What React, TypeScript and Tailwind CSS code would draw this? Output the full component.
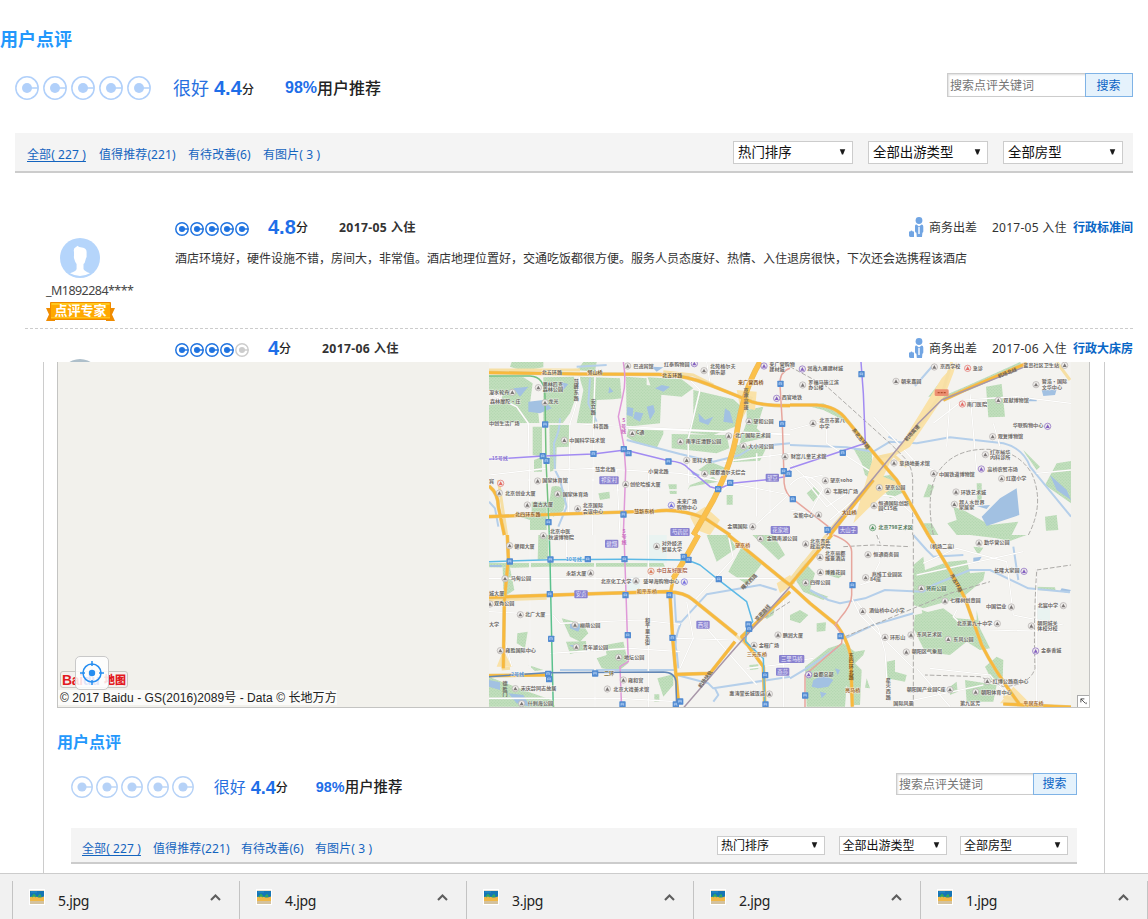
import React from "react";

const CJK = "font-['Noto_Sans','Noto_Sans_CJK_SC',sans-serif]";
const ARIAL = "font-['Liberation_Sans','Noto_Sans_CJK_SC',sans-serif]";

/* ---------- rating rings ---------- */
function Ring({ className, weight = 1.5, dot = 5 }: { className: string; weight?: number; dot?: number }) {
  return (
    <svg viewBox="0 0 24 24" preserveAspectRatio="none" className={"block shrink-0 " + className} fill="none" stroke="currentColor" strokeWidth={weight}>
      <circle cx="12" cy="12" r={12 - weight / 2 - 0.1} />
      <circle cx="12" cy="12" r={dot} fill="currentColor" stroke="none" />
      <path d="M12 12H23" />
    </svg>
  );
}

/* ---------- summary header, search and filter bar ---------- */
function Search({ compact }: { compact?: boolean }) {
  return (
    <div className={"flex text-[12px] leading-none " + (compact ? "h-[22px]" : "h-6")}>
      <div className={"flex items-center border border-r-0 border-[#ccc] bg-white pt-px pl-[2px] text-[#757575] shadow-[inset_1px_1px_2px_#ddd] " + (compact ? "w-[137px]" : "w-[138px]")}>
        搜索点评关键词
      </div>
      <div className={"flex items-center justify-center border border-[#7fb3e6] bg-[#e5f2fc] pr-px text-[#0a62c4] " + (compact ? "w-11" : "w-12 pt-px")}>搜索</div>
    </div>
  );
}

function Select({ label, compact }: { label: string; compact?: boolean }) {
  return (
    <div className={"flex items-center justify-between border border-[#ccc] bg-white leading-none text-[#111] " + (compact ? "h-[19px] w-[108px] pr-[6px] pl-[3px] text-[12px]" : "h-[23px] w-[120px] pr-[6px] pl-1 text-[13.4px]")}>
      <span className={compact ? "" : "pt-px"}>{label}</span>
      <svg viewBox="0 0 7 7" className="mb-px h-[6px] w-[7px]"><path d="M.3 .3H6.7L4.2 6.5H2.8Z" fill="#1a1a1a" /></svg>
    </div>
  );
}

function Filters({ compact }: { compact?: boolean }) {
  return (
    <div className={"flex justify-between border-b-2 border-[#ccc] bg-[#f4f4f4] " + (compact ? "h-9 pr-[9px] pl-[11px]" : "h-10 pr-[10px] pl-3")}>
      <div className={"flex text-[12px] leading-[14px] tracking-[.1px] whitespace-pre text-[#1464bf] " + (compact ? "gap-[11px] pt-[14px]" : "gap-[12px] pt-[15px]")}>
        <span className="w-[60px] underline underline-offset-2">全部( 227 )</span>
        <span className="w-[77px]">值得推荐(221)</span>
        <span className="w-[63px]">有待改善(6)</span>
        <span>有图片( 3 )</span>
      </div>
      <div className={"flex pt-2 " + (compact ? "gap-[13.5px]" : "gap-[15px]")}>
        <Select compact={compact} label="热门排序" />
        <Select compact={compact} label="全部出游类型" />
        <Select compact={compact} label="全部房型" />
      </div>
    </div>
  );
}

function Summary() {
  return (
    <div className="flex h-[31px] items-center pl-[15px] leading-none whitespace-nowrap">
      <div className="flex gap-1 text-[#b1d0fa]">
        {[0, 1, 2, 3, 4].map((i) => <Ring key={i} className="size-6" />)}
      </div>
      <span className="ml-[22px] w-[41px] text-[18px] text-[#2770df]">很好</span>
      <span className={"w-7 pt-px text-[20px] font-bold text-[#1e6ee8] " + ARIAL}>4.4</span>
      <span className="w-[42px] pt-[4px] text-[12px] font-medium text-[#222]">分</span>
      <span className={"ml-px w-8 pt-px text-[16px] font-bold text-[#1e6ee8] " + ARIAL}>98%</span>
      <span className="text-[16px] font-medium text-[#222]">用户推荐</span>
    </div>
  );
}

function CompactSummary() {
  return (
    <div className="flex h-[28px] items-center pl-[27px] leading-none whitespace-nowrap">
      <div className="flex gap-[3.2px] text-[#b6d2f7]">
        {[0, 1, 2, 3, 4].map((i) => <Ring key={i} className="size-[22px]" />)}
      </div>
      <span className="ml-[20px] w-[37px] text-[16px] text-[#2770df]">很好</span>
      <span className={"w-[25px] pt-px text-[18px] font-bold text-[#1e6ee8] " + ARIAL}>4.4</span>
      <span className="w-[40px] pt-[2px] text-[12px] font-medium text-[#222]">分</span>
      <span className={"w-[29px] text-[14.4px] font-bold text-[#1e6ee8] " + ARIAL}>98%</span>
      <span className="text-[14.4px] font-medium text-[#222]">用户推荐</span>
    </div>
  );
}

/* ---------- reviews ---------- */
function Traveller() {
  return (
    <svg viewBox="0 0 15 20" className="mr-[5px] h-5 w-[15px]" fill="#71a5e3">
      <circle cx="10" cy="3.5" r="3.4" />
      <path d="M6 9Q6 7.6 7.5 7.6L10 9.5 12.5 7.6Q14.3 7.8 14.3 9.5V14.5Q14.3 15.5 13.4 15.8L13 20H7.8L7.4 15.8Q6 15.5 6 14Z" />
      <path d="M10 10V17" stroke="#fff" strokeWidth="1.4" />
      <path d="M0 14.5H5V20H1.3Q0 20 0 18.6ZM1.2 14.5Q2.4 12.6 3.8 14.5" />
    </svg>
  );
}

function ReviewHead({ score, full, date, room, narrow }: { score: string; full: number; date: string; room: string; narrow?: boolean }) {
  return (
    <div className="flex h-7 items-center leading-none whitespace-nowrap">
      <div className="flex w-[93px] gap-px pt-[3px] text-[#1f73e0]">
        {[0, 1, 2, 3, 4].map((i) => (
          <Ring key={i} weight={2.5} dot={5.2} className={i < full ? "size-[14px]" : "size-[14px] text-[#ccc]"} />
        ))}
      </div>
      <span className={"text-[20px] font-bold text-[#1e6ee8] " + ARIAL + (narrow ? " w-[11px]" : " w-[28px]")}>{score}</span>
      <span className="w-[43px] pt-[2px] text-[12px] font-medium text-[#222]">分</span>
      <span className="pt-[2px] text-[12.2px] font-bold tracking-[.35px] text-[#333]">{date} 入住</span>
      <div className="ml-auto flex items-center text-[12px] text-[#333]">
        <Traveller />
        <span className="w-[63px] pt-[2px]">商务出差</span>
        <span className="w-[81px] pt-[2px] tracking-[.25px]">{date} 入住</span>
        <span className="pt-[2px] font-bold text-[#0866c6]">{room}</span>
      </div>
    </div>
  );
}

function Avatar({ className }: { className: string }) {
  return (
    <svg viewBox="0 0 40 40" className={"ml-[14px] block size-10 " + className}>
      <circle cx="20" cy="20" r="20" fill="currentColor" />
      <path d="M14 14Q13 10 16 9L17.5 7.8Q18.5 9.2 22 9.5Q27 10 26.6 15L26.6 19Q25.9 20 25.5 22Q25 25 23.5 26V31Q24 33 30 35.3Q25 38 20 38T10 35.3Q16 33.5 16.6 31V26Q15.3 24.8 14.6 22Q13.5 19.5 14 18Z" fill="#fff" />
    </svg>
  );
}

function ExpertBadge() {
  return (
    <div className="relative mt-[4px] flex h-5 w-[69px] items-center justify-center">
      <svg viewBox="0 0 69 20" className="absolute inset-0 h-5 w-[69px]">
        <path d="M0 6H9V19H0L3 12.5ZM69 6H60V19H69L66 12.5Z" fill="#f08c00" />
        <path d="M4.500 .5H64.500V17.500H4.500Z" fill="#ffa900" stroke="#ef8b00" />
        <path d="M5.500 2H63.500" stroke="#ffe63d" />
        <path d="M5 15.500H64" stroke="#ffc31f" />
      </svg>
      <span className="relative mb-[3px] text-[13px] leading-none font-bold text-white">点评专家</span>
    </div>
  );
}

/* ---------- map: four sheets drawn on a 930 x 525 grid ---------- */
type Label = [number, number, string, string?];
type Sheet = {
  x: number; y: number;
  parks: string; water: string; streams: string; streets: string;
  yellow: string; thin: string; rail: string;
  metro: [string, string][];
  stations: [number, number][];
  labels: Label[];
  pois: [number, number, string?][];
  tags: Label[];
};

const sheets: Sheet[] = [
  {
    x: 0, y: 0,
    parks: "M27 48L130 52 158 70 150 130 175 160 178 190 27 190V135L60 128 70 100 27 90ZM95 6H190V22L130 33 90 20ZM190 52L282 50 290 105 270 160 248 190H190ZM298 50L420 55 425 115 400 118 350 120 345 190H290L310 90ZM262 28L295 26 310 6H350L345 35ZM438 50L500 55 500 75 545 80 540 190 440 200ZM503 52L605 58 640 85 605 110 520 102ZM640 90L760 118 785 140 765 200 700 225 625 218 640 170ZM158 200H186V335H162V300L186 290 158 285ZM208 195H268V260L230 262 228 330 210 335ZM445 205H550V222L530 265 470 250 440 230ZM575 222L740 225 748 265 710 280 575 265ZM800 150L850 140 830 205 860 232 780 250 770 300 760 305 800 185ZM770 255L860 262 840 302 760 306ZM155 425H200V510H150V480L120 470 155 460ZM215 380Q245 370 260 405L250 452 220 470 204 450ZM355 400L388 395 390 415 360 420ZM565 373H590V402H570ZM740 405H758V434H740ZM630 380L715 365 700 350 630 375 620 395ZM740 325L690 305 655 330 690 345Z",
    water: "M100 85L145 80 120 110ZM145 125L190 120 215 145 180 160 145 155ZM525 85L545 75 570 80 550 95ZM515 20L550 22 530 35ZM442 140L460 145 458 170 440 165ZM465 155L490 160 480 185 460 175ZM500 140L520 135 525 155 510 180ZM655 160L675 180 700 170 685 195 658 185ZM735 145L750 155 760 190 730 185ZM240 65L265 72 250 90ZM388 80L400 95 385 100ZM630 330L660 345 645 355Z",
    streams: "M240 175Q240 210 222 250L225 330 240 360 260 440 235 500M330 55L325 130 350 185M440 240L600 282 700 305 780 285 820 260 930 250M290 20L380 15M27 425L45 445 55 500",
    streets: "M27 100L110 140 145 190 150 460M27 192L300 192 345 195 930 225M298 50Q300 110 270 190L265 460M345 50L340 190 338 525M445 205L930 222M220 330L345 325 600 340 930 405M27 345L200 325M505 340V525M400 390L625 390M730 305L930 280M620 50L660 90 625 235 625 370M760 360L690 430M830 280V470M870 265V460M410 330L420 525M55 360H430M930 400L810 510M680 6L690 70",
    yellow: "M27 38L300 42 535 43Q620 45 690 75L815 125Q850 137 930 137M840 6Q790 90 770 220 755 310 700 420L640 525M27 378Q55 400 55 440L73 525M27 470L250 462 530 453Q600 445 675 475L750 525",
    thin: "M27 30H300M550 35L640 45 700 75M815 110L780 180 760 280M55 360L80 525",
    rail: "",
    metro: [["M27 48H150Q195 50 195 110L198 300 208 525", "#73c180"], ["M27 298L190 288 340 282 435 270 565 302Q610 305 625 325L690 380 715 387 755 370 870 358 915 350 930 330", "#a28bf2"], ["M430 6Q440 65 428 110L415 170 432 260 437 330 430 525", "#df99d8"], ["M930 25Q898 35 900 75L907 190 912 350Q910 390 930 410", "#e7a69d"]],
    stations: [[195, 193], [188, 288], [199, 302], [340, 281], [431, 267], [445, 279], [565, 304], [714, 387], [750, 368], [205, 486], [430, 463], [901, 71], [906, 191], [911, 333], [925, 341]],
    labels: [[185, 42, "北五环路"], [322, 43, "邻山桥", "#75603a"], [546, 51, "北五环路", "#75603a"], [460, 24, "巴迪宾馆"], [552, 19, "红泰购物园"], [690, 25, "北苑格尔夫"], [690, 41, "俱乐部"], [774, 72, "来广营西桥", "#8a5620"], [188, 78, "奥林匹克"], [188, 94, "森林公园"], [27, 102, "漫水轮舟"], [30, 130, "森林摩陀·庄"], [205, 130, "龙光"], [27, 196, "中创生活广场"], [340, 204, "科荟路"], [468, 222, "C通"], [617, 250, "南李庄清野公园"], [765, 230, "北广国际艺术园"], [805, 263, "大小河公园"], [820, 189, "望和公园"], [268, 245, "中国科学技术馆"], [35, 300, "15号线", "#8870ce"], [345, 333, "慧忠北路"], [505, 340, "小营北路"], [636, 305, "思科大厦"], [690, 343, "成都清尔夫综合"], [187, 367, "国家体育馆"], [248, 407, "国家体育场"], [75, 404, "北京创业大厦"], [158, 439, "盘古大厦"], [308, 442, "北京国际"], [308, 458, "会议中心"], [105, 469, "北四环东路", "#8c6330"], [462, 460, "慧新东桥", "#8c6330"], [450, 378, "创伦哈维大厦"], [590, 430, "未来广场"], [590, 446, "购物中心"], [742, 505, "金隅国际"], [210, 520, "北京中医"], [868, 19, "来广营购物"], [868, 34, "建材城"], [905, 118, "西官地铁"], [27, 370, "宾"]],
    pois: [[443, 18], [672, 32], [643, 11, "#8460c0"], [852, 18, "#8460c0"], [175, 83], [97, 97], [195, 128], [457, 220], [601, 245], [746, 228], [790, 258], [807, 184], [253, 241], [674, 341], [620, 301], [173, 363], [233, 402], [58, 399], [142, 435], [293, 446], [437, 373], [574, 436, "#7770e0"], [62, 370, "#e66b64"], [818, 500], [890, 115, "#8460c0"], [915, 290]],
    tags: [[387, 361, "祁家村"], [877, 353, "望京"], [600, 516, "芍药居"], [901, 510, "花家地"]],
  },
  {
    x: 930, y: 0,
    parks: "M588 80L635 72 645 170 595 172ZM190 265L245 265 248 360 225 345 215 310ZM800 310L843 303V430L765 375ZM490 440L520 450 600 495 685 485 665 525H500L472 490 500 480ZM560 370H575V420H562ZM700 270L750 320 740 330 705 280ZM765 470L800 465 805 510 768 512ZM50 400L75 378 90 400 70 425ZM415 372L433 378 420 412 400 412ZM265 350L300 345 345 395 300 415 280 390 250 415 240 405ZM455 60L470 62 430 110 415 110ZM400 490H425L445 525H410ZM450 120L540 90 700 20 690 6 530 78 460 108ZM50 137L100 130 160 165 185 200 150 175 100 150Z",
    water: "M575 470L630 415 680 385 688 465 590 498ZM560 438L600 435 590 447ZM755 90L800 88 795 105 760 108ZM720 117H740V124H715ZM780 345L830 390 843 420 800 390Z",
    streams: "M0 255L170 262 250 275 300 245 380 250 480 232 640 250Q700 265 720 320L843 470M430 15L375 78M295 230L320 242M265 360L210 420",
    streets: "M0 210L110 180 110 250 250 340M45 350L160 470M0 310L50 355 100 345M0 375Q50 320 100 385L60 460 0 450M120 480L190 420 290 460M45 360L110 440 170 400M250 170L370 300 450 340M430 190L520 120 680 110 843 130M470 260L480 120M540 100L560 330M240 400L310 410 400 490M740 340L843 330M610 190L630 260",
    yellow: "M0 135H80Q140 138 170 180L260 290 320 360 415 525M460 120L540 83 710 10M250 360L120 525",
    thin: "M485 6L460 90 400 180 260 345 120 510M800 6L840 60M270 290L310 285 350 320",
    rail: "M100 70L300 250 340 290Q370 320 368 370V525M430 525Q405 400 445 335 490 270 580 268 680 265 725 340 765 430 715 525M0 20L110 80",
    metro: [["M213 6L220 100 226 250 0 325", "#a28bf2"], ["M700 22L455 120 385 190 110 525", "#a897a9"], ["M10 418L115 500", "#e7a69d"]],
    stations: [[214, 42], [158, 278], [8, 417], [112, 509]],
    labels: [[52, 30, "润鑫九雅建材城"], [55, 72, "罗福马施江滨"], [55, 87, "办公楼"], [333, 68, "朝来嘉园"], [450, 25, "京西学校"], [548, 30, "急诊"], [530, 139, "南门医院"], [640, 125, "双献博物馆"], [755, 70, "暂浩·国际"], [755, 88, "文华中心"], [668, 202, "华联购物中心"], [623, 234, "观复博物馆"], [88, 187, "北京市第八"], [88, 203, "中学"], [2, 295, "财富儿童艺术馆"], [120, 367, "望京soho"], [128, 399, "韦斯特广场"], [328, 315, "草场地美术馆"], [285, 388, "望京公园"], [265, 434, "恒通国际创新"], [265, 450, "园C15栋"], [265, 508, "北京798艺术区", "#4f7555"], [447, 347, "中国铁道博物馆"], [592, 332, "高桥农贸市场"], [600, 281, "红京榆华"], [600, 297, "内科诊所"], [648, 361, "红旗小学"], [512, 401, "环铁艺术城"], [507, 431, "超人水世界"], [507, 446, "家居家"], [155, 463, "大山桥", "#8a5620"], [700, 20, "蓝岛社区卫生站"], [10, 470, "宝能中心"]],
    pois: [[37, 27, "#8460c0"], [38, 75], [318, 64], [433, 21], [533, 25, "#e66b64"], [517, 132, "#e66b64"], [625, 121], [738, 74], [824, 16], [773, 199, "#8460c0"], [608, 230], [69, 190], [106, 362], [113, 394], [312, 309], [268, 383], [252, 437], [248, 503, "#589866"], [431, 341], [574, 327, "#8460c0"], [586, 284], [635, 356], [498, 396], [493, 433], [86, 465]],
    tags: [[174, 510, "大山子"]],
  },
  {
    x: 0, y: 525,
    parks: "M175 0H205V70L173 75ZM27 84L550 84 555 95H200L100 98 27 97ZM68 98H90L103 165 80 180 70 160ZM680 0H745L770 40 710 80ZM785 35L850 80 800 148 745 110ZM817 0L880 0 915 60 895 75ZM245 250L285 260 310 270 325 295 300 320 270 305ZM258 320L318 318 320 345 270 357ZM375 330L430 320 445 385 415 408 365 400 350 370 380 360ZM112 295L143 290 135 340 110 325ZM27 425L65 440 145 470 215 495 225 515H27ZM532 430L580 418 580 450 550 485ZM523 478H538V500H523ZM808 390L835 388V402L810 405ZM848 235L885 215 880 240 860 252ZM145 390L190 405 165 408Z",
    water: "M27 435L60 442 60 465 27 455ZM85 475L130 480 150 515 110 505ZM270 260L305 268 295 290 270 280ZM268 330L300 330 290 345ZM30 90H65V96H30Z",
    streams: "M583 175L588 260H605L680 178 840 150 890 165M602 265Q580 320 590 350L595 400M930 425L700 460 685 445 590 420M240 405H590M705 460L715 480 700 500",
    streets: "M27 230L220 240 240 265 480 255 600 268M150 30V400M345 0V525M505 0V525M260 0V75M27 130L930 130M440 130H600M210 355L450 340 600 350M745 0L760 70 640 200M27 490L420 490 590 500M590 310L760 315M95 395L70 300M620 200L640 310 600 400M800 400L930 385M680 280L830 450M910 180V525",
    yellow: "M82 0L85 70 73 200 70 400M27 187L370 175 560 170Q615 172 640 195L770 300M655 0Q620 65 580 130M580 130L570 180 578 310 595 500M590 418L690 415 765 320M745 0L910 135 930 150M930 170L785 305 850 395 855 525M27 422L200 420",
    thin: "M27 195L200 190M65 402L90 400M750 285L800 330",
    rail: "M820 270L930 200",
    metro: [["M208 0L210 75 215 310 220 525", "#5bc18d"], ["M27 80L210 74 433 73 610 75Q640 80 660 90L710 130 800 200 818 260 800 280 797 320 850 370 855 525", "#5cb9e6"], ["M432 0L438 175 442 300 445 380 420 395 425 525", "#df99d8"], ["M27 425L200 413 550 411Q585 412 588 440L590 525", "#6287b7"], ["M930 155L765 340 700 415 605 525", "#a897a9"]],
    stations: [[89, 79], [211, 73], [323, 72], [433, 72], [611, 65], [625, 74], [716, 132], [209, 177], [436, 180], [568, 180], [213, 311], [443, 300], [577, 308], [805, 268], [807, 281], [204, 416], [207, 432], [345, 415], [855, 420], [427, 508], [587, 508], [600, 499], [856, 508]],
    labels: [[103, 38, "健翔大厦"], [205, 13, "秋波博物院"], [257, 79, "10号线", "#4c9bd8"], [545, 31, "对外经济"], [545, 47, "贸易大学"], [258, 119, "永新大厦"], [530, 112, "中日友好医院", "#ac6956"], [362, 144, "北京化工大学"], [490, 145, "盛琴海购物中心"], [92, 136, "马甸公园"], [27, 180, "城大厦"], [42, 210, "双秀公园"], [470, 173, "和平东桥", "#ac7730"], [765, 37, "望京桥", "#ac6d35"], [135, 244, "北广大厦"], [300, 275, "柳荫公园"], [308, 341, "青年湖公园"], [432, 372, "地坛公园"], [76, 352, "雍胜国际中心"], [93, 424, "2号线", "#5b91ce"], [372, 419, "二环", "#82713f"], [444, 440, "雍和宫"], [122, 465, "宋庆龄同志故居"], [143, 510, "什刹海公园"], [400, 467, "北京大戏美术馆"], [836, 335, "金程广场"], [800, 362, "三元东桥", "#a36c31"], [748, 479, "惠涛堂长城饭店"], [860, 15, "金隅南湖公园"], [27, 272, "大学"], [908, 305, "鹏润大厦"]],
    pois: [[89, 32], [190, 2], [530, 34], [332, 114], [513, 109, "#dd8060"], [468, 138], [613, 141, "#7770e0"], [75, 131], [30, 207], [121, 239], [285, 270], [289, 336], [416, 367], [61, 347], [430, 435], [106, 461], [125, 506], [382, 462], [822, 331], [841, 11], [894, 300], [868, 477]],
    tags: [[395, 26, "健翔"], [303, 178, "安贞"], [669, 269, "西坝"], [908, 410, "燕莎"]],
  },
  {
    x: 930, y: 525,
    parks: "M40 78L75 115 60 165 115 185 100 195 40 170 20 140 15 110ZM370 90L400 65 405 105 475 80 530 75 540 115 585 110 580 135 520 185 400 220 370 210ZM375 240L460 220 500 250 560 255 560 225 570 280 600 340 570 345 530 320 480 360 405 350 370 280ZM585 395L620 365 640 375 638 430 605 435ZM525 435L620 450 610 500 530 500ZM0 240L30 225 55 240 30 265 0 255ZM80 265L108 262 106 288 80 290ZM45 395L115 340 160 325 195 350 225 345 220 360 195 385 215 405 210 510 190 510 170 450 165 515H50ZM290 380L315 375 315 410 350 420 345 440 290 430ZM540 0L620 10 660 18 710 0ZM550 35L580 38 565 60ZM735 155L795 157 797 167 735 165ZM480 455L500 440 503 470 480 480ZM230 430L240 460 225 458ZM110 105L160 120 145 130 105 118ZM395 225L440 240 440 310 410 295Z",
    water: "M70 435L100 420 130 435 115 455 85 460 65 455ZM550 68L575 65 565 82 550 80ZM135 400L150 405 143 420ZM90 470L110 475 95 490ZM815 160L843 165 835 175 810 168Z",
    streams: "M60 165L115 195 150 205 225 190 285 165 400 170 430 150 540 105 600 105 715 160 840 172M165 310L250 270 370 235M0 430L50 400 140 340M670 35L685 135M370 0L410 45 430 65 520 60",
    streets: "M200 200L265 280 285 350 295 500M185 190L210 240 370 400M400 85L500 40 650 80 670 240 820 270M500 225L490 245 505 260M740 100L740 515M585 285L810 290M265 0L270 80 240 140 210 150M380 120L700 50M0 380L70 370M350 500L580 450M380 400L480 515M420 400L600 420 650 480",
    yellow: "M125 0L0 150M0 150L60 205 140 270Q170 310 182 360L187 515M415 0Q490 120 525 190L575 330Q615 410 690 510M640 507L843 516",
    thin: "M110 0L0 135M640 485L690 500M650 455L690 510",
    rail: "M370 0V525M160 35L250 30 360 35M165 305L370 220 480 175 600 140M740 110Q730 260 735 400 720 450 640 455L570 425 405 420M740 105L843 90M260 0L270 25",
    metro: [["M130 0Q185 20 185 50V180Q185 210 150 250L135 270 157 300 155 325 45 420 45 520", "#e7a69d"]],
    stations: [[187, 150], [151, 303], [45, 481]],
    labels: [[60, 23, "北京青年"], [60, 39, "政治学院"], [105, 60, "北京丽都"], [105, 76, "维景酒店"], [250, 62, "恒通商务园"], [582, 28, "勤华营公园"], [245, 122, "兆维工业园区"], [240, 139, "84座"], [105, 116, "博雅花园"], [60, 147, "四得公园"], [408, 165, "将府公园", "#56755a"], [612, 112, "长隆大家园"], [480, 202, "七棵树创意园"], [237, 232, "酒仙桥中心小学"], [300, 312, "环形山"], [380, 304, "东风艺术区"], [490, 317, "东风公园"], [500, 271, "北京第九十中学"], [588, 220, "中国铝业"], [743, 217, "北宸中学"], [742, 270, "朝阳城关"], [742, 286, "体校分校"], [753, 352, "金泰香城"], [365, 355, "朝阳区气象局"], [608, 444, "红博公路商中心"], [573, 476, "朝阳体育中心"], [350, 469, "朝阳国产业园C座"], [700, 509, "平房东桥", "#a36c31"], [420, 40, "(机场二高)"], [70, 424, "益都总部"], [165, 472, "亮马桥", "#a36c31"], [310, 509, "国际风景"], [510, 509, "第九区芳"]],
    pois: [[47, 27], [90, 67], [234, 59], [567, 24], [227, 128], [91, 112], [47, 143], [394, 160], [702, 109, "#8460c0"], [465, 198], [218, 229], [285, 307], [363, 300], [475, 313], [622, 266], [664, 216], [820, 212], [724, 273], [737, 348, "#8460c0"], [349, 351], [592, 439], [557, 471], [480, 464], [56, 419, "#8460c0"]],
    tags: [[5, 372, "三里马桥"]],
  },
];

const vertical: Label[] = [
  [289, 68, "慧峰东路"], [340, 128, "安立路"], [798, 95, "京承高速"], [431, 186, "5号线", "#c967bd"],
  [503, 785, "和平里东街"], [75, 975, "德胜门"], [1114, 890, "东四环北路", "#775828"], [1225, 965, "星火西路"],
  [432, 518, "5号线", "#c967bd"],
];

const slanted: [number, number, number, string][] = [
  [1115, 210, 52, "东北五环路"], [1280, 245, -48, "机场高速"], [1556, 55, -22, "机场北线"],
  [832, 784, -48, "京密路线"], [662, 985, -53, "机场快轨"], [790, 690, -45, "曙光西路"], [1410, 645, 62, "东五环路"],
];

function MapView() {
  const layer = (draw: (s: Sheet) => React.ReactNode) =>
    sheets.map((s, i) => <g key={i} transform={`translate(${s.x} ${s.y})`}>{draw(s)}</g>);
  return (
    <svg viewBox="-1266 6 3093 1035" className="block h-[345px] w-[1031px] font-['Noto_Sans_CJK_SC',sans-serif]" fill="none">
      <defs>
        <clipPath id="tiles"><path d="M27 6H1773V1041H27Z" /></clipPath>
        <pattern id="grass" width="9" height="9" patternUnits="userSpaceOnUse">
          <path d="M0 0H9V9H0Z" fill="#c2dfbd" /><path d="M0 0H4V4H0ZM5 5H9V9H5Z" fill="#b5d8b2" />
        </pattern>
      </defs>
      <path d="M-1266 6H1827V1041H-1266Z" fill="#f2f1ec" />
      <g clipPath="url(#tiles)" strokeLinejoin="round">
        <path d="M27 6H1773V1041H27Z" fill="#f4f3f0" />
        <path d="M500 525H560V610H500ZM440 650H480V690H440ZM1670 740H1710V780H1670Z" fill="#e9f3f1" />
        {layer((s) => <path d={s.parks} fill="url(#grass)" />)}
        {layer((s) => <path d={s.water} fill="#a2c1e2" />)}
        {layer((s) => <path d={s.streams} stroke="#b5cfea" strokeWidth="6" />)}
        {layer((s) => <path d={s.streets} stroke="#e4e2dd" strokeWidth="5" />)}
        {layer((s) => <path d={s.streets} stroke="#fff" strokeWidth="3.5" />)}
        <path d="M1180 290L1245 275 1210 350 1260 370 1215 400 1170 440 1120 490ZM1385 55L1430 6 1420 40 1395 105 1290 260 1240 290ZM630 470L675 440 720 480 690 525 650 510ZM770 90L830 95 825 150 780 140ZM50 920L70 870 95 920ZM1560 1030L1600 980 1650 1030ZM890 670L930 645 945 670 900 700Z" fill="#fae2a8" />
        {layer((s) => <path d={s.thin} stroke="#f6dfa4" strokeWidth="9" />)}
        {layer((s) => <path d={s.rail} stroke="#adaba8" strokeWidth="3" strokeDasharray="14 6" />)}
        {layer((s) => <path d={s.yellow} stroke="#e7c680" strokeWidth="11" />)}
        {layer((s) => <path d={s.yellow} stroke="#f8b93c" strokeWidth="8" />)}
        <path d="M840 6Q790 90 770 220 755 310 700 420L640 525M655 525Q620 590 580 655" stroke="#e7b95f" strokeWidth="17" />
        <path d="M840 6Q790 90 770 220 755 310 700 420L640 525M655 525Q620 590 580 655" stroke="#fbc04a" strokeWidth="14" />
        {layer((s) => s.metro.map(([d, c]) => <path key={d} d={d} stroke={c} strokeWidth="4.5" />))}
        {layer((s) => s.stations.map(([x, y]) => (
          <g key={`${x}-${y}`}>
            <rect x={x - 9} y={y - 9} width="19" height="19" rx="2" fill="#528bd1" />
            <path d={`M${x - 4} ${y + 4}V${y - 3}H${x + 4}V${y + 4}M${x - 4} ${y + 1}H${x + 4}`} stroke="#b9d4f6" strokeWidth="2" />
          </g>
        )))}
        <rect x="1364" y="88" width="42" height="20" rx="4" fill="#ec8f72" />
        <path d="M1373 98H1398" stroke="#b2502e" strokeWidth="4" strokeDasharray="6 3" />
        {layer((s) => s.pois.map(([x, y, c]) => (
          <g key={`${x}-${y}`}>
            <circle cx={x} cy={y} r="9.5" fill="#eeecea" stroke={c || "#b0acaa"} strokeWidth="2" />
            <path d={`M${x} ${y - 6}L${x + 6} ${y + 5}H${x - 6}Z`} fill={c || "#7b7675"} />
          </g>
        )))}
        {layer((s) => s.labels.map(([x, y, t, c]) => (
          <text key={`${x}-${y}`} x={x} y={y} fontSize="15.3" fontWeight="700" fill={c || "#6d6966"} stroke="#fff" strokeOpacity=".6" strokeWidth="3" paintOrder="stroke">{t}</text>
        )))}
        {vertical.map(([x, y, t, c]) => (
          <text key={`${x}-${y}`} textAnchor="middle" fontSize="15.3" fontWeight="700" fill={c || "#6d6966"}>
            {Array.from(t).map((ch, i) => <tspan key={i} x={x} y={y + i * 17}>{ch}</tspan>)}
          </text>
        ))}
        {slanted.map(([x, y, r, t]) => (
          <text key={t} transform={`translate(${x} ${y}) rotate(${r})`} fontSize="15" fontWeight="700" fill="#6c6255">{t}</text>
        ))}
        {layer((s) => s.tags.map(([x, y, t]) => (
          <g key={`${x}-${y}`}>
            <rect x={x - 9 * t.length - 2} y={y - 12} width={18 * t.length + 4} height="24" rx="3" fill="#8982cf" />
            <text x={x} y={y + 6} textAnchor="middle" fontSize="16" fill="#f0efff">{t}</text>
          </g>
        )))}
      </g>
    </svg>
  );
}

function BaiduLogo() {
  return (
    <div className="absolute bottom-[19px] left-[2px] flex h-[17px] w-[68px] items-center justify-between rounded-[3px] border border-[#c9c7c2] bg-[#f4f1ee] px-px leading-none font-bold text-[#e31b1f]">
      <span className={"text-[14px] tracking-[-.3px] " + ARIAL}>Bai<span className="text-[#3152d4]">du</span></span>
      <span className="text-[11px] font-black">地图</span>
    </div>
  );
}

function MapPanel() {
  return (
    <div className="relative ml-[13px] w-[1033px] border border-t-0 border-[#c4c4c2]">
      <MapView />
      <BaiduLogo />
      <div className="absolute bottom-[17px] left-[17px] flex size-[34px] items-center justify-center rounded-[5px] border border-[#c9c9c9] bg-white/85">
        <svg viewBox="0 0 24 24" className="size-6" fill="none" stroke="#258df0" strokeWidth="1.5">
          <circle cx="12" cy="12" r="9" /><circle cx="12" cy="12" r="3.2" fill="#258df0" stroke="none" />
          <path d="M12 0V5M12 19V24M0 12H5M19 12H24" />
        </svg>
      </div>
      <div className={"absolute bottom-[2px] left-0 h-[15px] w-[279px] bg-white/70 pt-px pl-[2px] text-[12px] leading-[15px] tracking-[.07px] whitespace-nowrap text-[#222] " + ARIAL}>
        © 2017 Baidu - GS(2016)2089号 - Data © 长地万方
      </div>
      <div className="absolute right-0 bottom-0 flex size-3 items-center justify-center border-t border-l border-[#aaa] bg-white">
        <svg viewBox="0 0 8 8" className="size-[7px]" fill="none" stroke="#444"><path d="M1 5V1H5M1 1L6 6M7 5V7" /></svg>
      </div>
    </div>
  );
}

/* ---------- download shelf ---------- */
function DownloadItem({ name }: { name: string }) {
  return (
    <div className="flex h-[38px] w-[227px] shrink-0 items-center border-l border-[#c3c3c3] pr-[18px] pl-4">
      <svg viewBox="0 0 16 16" className="mb-[7px] size-4">
        <path d="M0 0H16V16H0Z" fill="#fff" /><path d="M1 1.500H15V15H1Z" fill="#d4c29e" />
        <path d="M1 2H15V9H1Z" fill="#1675b5" /><path d="M1 8Q5 7 8 8T15 7.500V12H1Z" fill="#efb746" />
        <path d="M3 8L5 5.500 7 8M9 8L11 6 12 8" stroke="#35ad58" strokeWidth="1.4" fill="none" /><path d="M2 3H8" stroke="#2b91ce" />
      </svg>
      <span className="ml-[13px] pt-px text-[14px] leading-none tracking-[-.3px] text-[#222]">{name}</span>
      <svg viewBox="0 0 11 7" className="mb-[5px] ml-auto h-[7px] w-[11px]" fill="none" stroke="#5d5d5d" strokeWidth="2.100"><path d="M1 6L5.500 1.500 10 6" /></svg>
    </div>
  );
}

export default function App() {
  return (
    <div className={"h-[919px] w-[1148px] overflow-hidden bg-white " + CJK}>
      <section className="h-[362px] overflow-hidden pt-[28px]">
        <h2 className="h-[44px] text-[18px] leading-[22px] font-bold text-[#2498fc]">用户点评</h2>
        <div className="mr-[15px] flex h-[61px] items-start justify-between">
          <Summary />
          <div className="pt-px"><Search /></div>
        </div>
        <div className="mr-[15px] ml-[15px]"><Filters /></div>
        <article className="mr-[15px] ml-[25px] flex h-[156px] border-b border-dashed border-[#ccc] pt-[40px]">
          <div className="ml-[21px] w-[129px] pt-[25px]">
            <Avatar className="text-[#b5d5fb]" />
            <div className="mt-[5px] h-[15px] text-[12.5px] leading-[15px] tracking-[-.55px] whitespace-nowrap text-[#444]">_M1892284****</div>
            <ExpertBadge />
          </div>
          <div className="grow">
            <ReviewHead score="4.8" full={5} date="2017-05" room="行政标准间" />
            <p className="mt-[10px] text-[12px] leading-[16px] whitespace-nowrap text-[#333]">
              酒店环境好，硬件设施不错，房间大，非常值。酒店地理位置好，交通吃饭都很方便。服务人员态度好、热情、入住退房很快，下次还会选携程该酒店
            </p>
          </div>
        </article>
        <article className="mr-[15px] ml-[25px] flex pt-[5px]">
          <div className="ml-[21px] w-[129px] pt-[25px]"><Avatar className="text-[#aebfca]" /></div>
          <div className="grow"><ReviewHead score="4" full={4} date="2017-06" room="行政大床房" narrow /></div>
        </article>
      </section>

      <section className="ml-[43px] h-[511px] w-[1062px] border-x border-[#ccc]">
        <MapPanel />
        <h2 className="mt-[24px] ml-[13px] h-[41px] text-[16px] leading-[20px] font-bold text-[#2498fc]">用户点评</h2>
        <div className="mr-[27px] flex h-[55px] items-start justify-between">
          <CompactSummary />
          <Search compact />
        </div>
        <div className="mr-[27px] ml-[27px]"><Filters compact /></div>
      </section>

      <footer className="flex h-[46px] items-end overflow-hidden border-t border-[#ccc] bg-[#f1f1f1] pl-3">
        {["5.jpg", "4.jpg", "3.jpg", "2.jpg", "1.jpg"].map((n) => <DownloadItem key={n} name={n} />)}
        <div className="h-[38px] w-px shrink-0 bg-[#c3c3c3]" />
      </footer>
    </div>
  );
}
